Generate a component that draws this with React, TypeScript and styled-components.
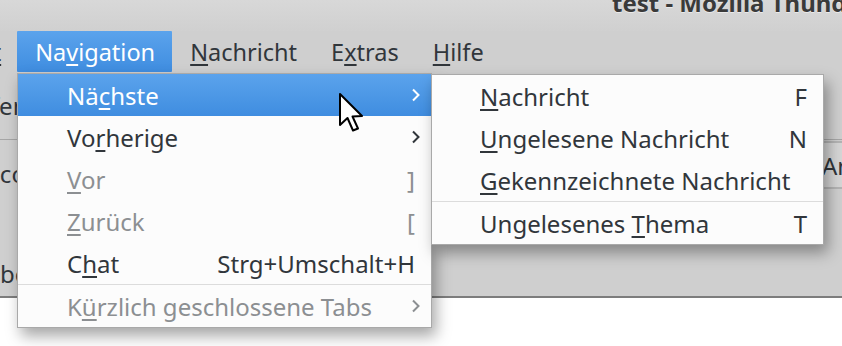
import styled, { createGlobalStyle } from 'styled-components';

const GlobalStyle = createGlobalStyle`
  html, body {
    margin: 0;
    padding: 0;
    background: #ffffff;
  }
  body {
    font-family: 'Noto Sans', 'Open Sans', sans-serif;
    color: #31363b;
  }
`;

const Window = styled.div`
  position: relative;
  width: 842px;
  height: 346px;
  overflow: hidden;
  display: flex;
  flex-direction: column;
  background: #ffffff;
`;

const Chrome = styled.div`
  display: flex;
  flex-direction: column;
  background: #cfcfcf;
  border-bottom: 2px solid #7d7d7d;
`;

const TitleBar = styled.div`
  height: 31px;
  display: flex;
  justify-content: flex-end;
  overflow: hidden;
  background: linear-gradient(#d8d8d8, #d0d0d0);
`;

const Title = styled.div`
  margin-top: -11px;
  width: 230px;
  white-space: nowrap;
  font-size: 24px;
  font-weight: 700;
  line-height: 28px;
  color: #3a3a3a;
  text-shadow: 0 1px 0 rgba(255, 255, 255, 0.5);
`;

const MenuBar = styled.div`
  height: 41px;
  display: flex;
  align-items: stretch;
`;

const BarItem = styled.div<{ $active?: boolean; $offset?: number }>`
  display: flex;
  align-items: center;
  padding: 0 ${(p) => (p.$active ? 17 : 16)}px 0 18px;
  margin-left: ${(p) => p.$offset ?? 0}px;
  font-size: 23.5px;
  white-space: nowrap;
  color: ${(p) => (p.$active ? '#ffffff' : '#31363b')};
  background: ${(p) =>
    p.$active ? 'linear-gradient(#5ba3ec, #3f8de0)' : 'transparent'};
  border-radius: 1px;
`;

const U = styled.span`
  text-decoration: underline;
  text-decoration-thickness: 2px;
  text-underline-offset: 3px;
`;

const Toolbar = styled.div`
  height: 67px;
  display: flex;
  align-items: center;
  border-bottom: 1px solid #a6a6a6;
  font-size: 24px;
`;

const CutLabel = styled.span<{ $offset: number }>`
  margin-left: ${(p) => p.$offset}px;
  white-space: nowrap;
`;

const SearchRow = styled.div`
  height: 50px;
  display: flex;
  justify-content: space-between;
  align-items: flex-end;
  font-size: 24px;
`;

const SearchField = styled.div`
  height: 44px;
  width: 200px;
  display: flex;
  align-items: center;
  justify-content: flex-end;
  border-top: 2px solid #b4b4b4;
  border-bottom: 2px solid #b4b4b4;
  background: #d6d6d6;
  overflow: hidden;
  margin-bottom: 1px;
`;

const FieldText = styled.span`
  width: 20px;
  white-space: nowrap;
  overflow: hidden;
`;

const LowerArea = styled.div`
  height: 106px;
  display: flex;
  align-items: flex-end;
  padding-bottom: 6px;
  box-sizing: border-box;
  font-size: 24px;
`;

const Menu = styled.div<{ $left: number; $top: number; $width: number }>`
  position: absolute;
  left: ${(p) => p.$left}px;
  top: ${(p) => p.$top}px;
  width: ${(p) => p.$width}px;
  box-sizing: border-box;
  background: #fcfcfc;
  border: 1px solid #a9a9a9;
  box-shadow: 4px 8px 14px rgba(0, 0, 0, 0.35);
  display: flex;
  flex-direction: column;
  font-size: 24px;
`;

const Row = styled.div<{ $active?: boolean; $disabled?: boolean; $pad: number }>`
  height: 42px;
  display: flex;
  align-items: center;
  padding: 0 16px 0 ${(p) => p.$pad}px;
  color: ${(p) =>
    p.$active ? '#ffffff' : p.$disabled ? '#8c8f92' : '#31363b'};
  background: ${(p) =>
    p.$active ? 'linear-gradient(#5ba3ec, #3f8de0)' : 'transparent'};
`;

const Label = styled.span`
  flex: 1;
  white-space: nowrap;
`;

const Shortcut = styled.span`
  white-space: nowrap;
`;

const Arrow = styled.svg`
  width: 10px;
  height: 14px;
  margin-right: -6px;
`;

const Separator = styled.div`
  height: 1px;
  background: #dcdcdc;
`;

const Cursor = styled.svg`
  position: absolute;
  left: 338px;
  top: 92px;
  width: 26px;
  height: 42px;
`;

function SubArrow({ color }: { color: string }) {
  return (
    <Arrow viewBox="0 0 10 14">
      <path d="M2 1.5 L7.5 7 L2 12.5" fill="none" stroke={color} strokeWidth="2" />
    </Arrow>
  );
}

export default function App() {
  return (
    <>
      <GlobalStyle />
      <Window>
        <Chrome>
          <TitleBar>
            <Title>test - Mozilla Thunderbird</Title>
          </TitleBar>
          <MenuBar>
            <BarItem $offset={-98}>
              Ansich<U>t</U>
            </BarItem>
            <BarItem $active>
              Na<U>v</U>igation
            </BarItem>
            <BarItem>
              <U>N</U>achricht
            </BarItem>
            <BarItem>
              E<U>x</U>tras
            </BarItem>
            <BarItem>
              <U>H</U>ilfe
            </BarItem>
          </MenuBar>
          <Toolbar>
            <CutLabel $offset={-64}>Abrufen</CutLabel>
          </Toolbar>
          <SearchRow>
            <CutLabel $offset={-27}>Account</CutLabel>
            <SearchField>
              <FieldText>Anzeigen</FieldText>
            </SearchField>
          </SearchRow>
          <LowerArea>
            <CutLabel $offset={-30}>Abbestellen</CutLabel>
          </LowerArea>
        </Chrome>

        <Menu $left={17} $top={73} $width={415}>
          <Row $active $pad={49}>
            <Label>
              Nä<U>c</U>hste
            </Label>
            <SubArrow color="#ffffff" />
          </Row>
          <Row $pad={49}>
            <Label>
              Vo<U>r</U>herige
            </Label>
            <SubArrow color="#31363b" />
          </Row>
          <Row $disabled $pad={49}>
            <Label>
              <U>V</U>or
            </Label>
            <Shortcut>]</Shortcut>
          </Row>
          <Row $disabled $pad={49}>
            <Label>
              <U>Z</U>urück
            </Label>
            <Shortcut>[</Shortcut>
          </Row>
          <Row $pad={49}>
            <Label>
              C<U>h</U>at
            </Label>
            <Shortcut>Strg+Umschalt+H</Shortcut>
          </Row>
          <Separator />
          <Row $disabled $pad={49}>
            <Label>
              K<U>ü</U>rzlich geschlossene Tabs
            </Label>
            <SubArrow color="#8c8f92" />
          </Row>
        </Menu>

        <Menu $left={431} $top={74} $width={393}>
          <Row $pad={48}>
            <Label>
              <U>N</U>achricht
            </Label>
            <Shortcut>F</Shortcut>
          </Row>
          <Row $pad={48}>
            <Label>
              <U>U</U>ngelesene Nachricht
            </Label>
            <Shortcut>N</Shortcut>
          </Row>
          <Row $pad={48}>
            <Label>
              <U>G</U>ekennzeichnete Nachricht
            </Label>
          </Row>
          <Separator />
          <Row $pad={48}>
            <Label>
              Ungelesenes <U>T</U>hema
            </Label>
            <Shortcut>T</Shortcut>
          </Row>
        </Menu>

        <Cursor viewBox="0 0 26 42">
          <path
            d="M2 2 L2 33 L9.5 26 L15 38.5 L20 36.5 L14.5 24.5 L24 24 Z"
            fill="#ffffff"
            stroke="#000000"
            strokeWidth="2"
            strokeLinejoin="round"
          />
        </Cursor>
      </Window>
    </>
  );
}
